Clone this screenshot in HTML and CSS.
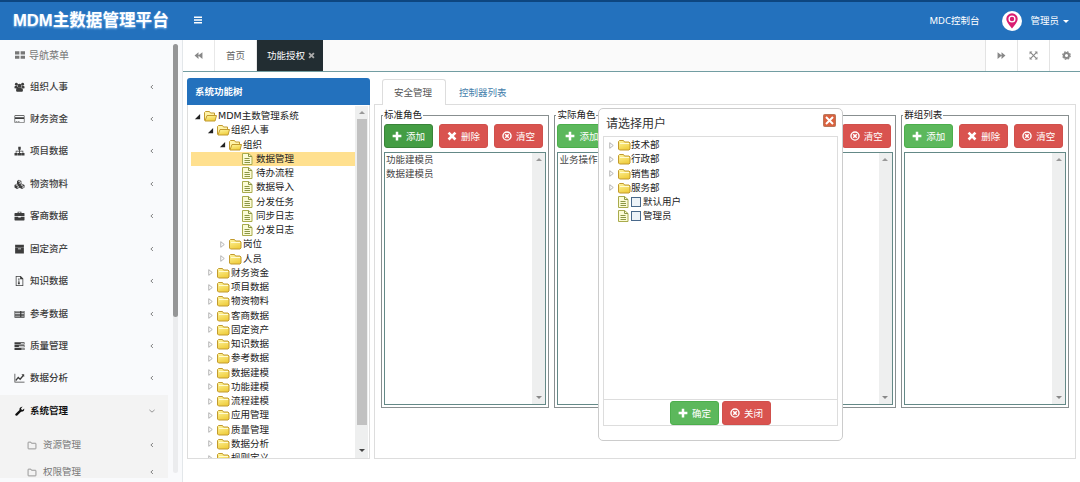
FILE: index.html
```html
<!DOCTYPE html>
<html lang="zh-CN">
<head>
<meta charset="utf-8">
<title>MDM主数据管理平台</title>
<link rel="stylesheet" href="styles.css">
</head>
<body>
<svg class="defs" width="0" height="0">
  <defs>
    <linearGradient id="gold" x1="0" y1="0" x2="0.4" y2="1"><stop offset="0" stop-color="#fff6a0"/><stop offset="1" stop-color="#f0cf42"/></linearGradient>
    <symbol id="grid" viewBox="0 0 16 16"><path d="M0 2h7v5H0zM9 2h7v5H9zM0 9h7v5H0zM9 9h7v5H9z"/></symbol>
    <symbol id="users" viewBox="0 0 16 16"><circle cx="3" cy="3.500" r="2.300"/><circle cx="13" cy="3.500" r="2.300"/><circle cx="8" cy="6" r="3.200"/><path d="M0 10V7q2-1.500 4-.5l2 2.500-2 1.500zM16 10V7q-2-1.500-4-.5L10 9l2 1.500zM2.500 14q0-5.500 3.500-5.500 2 1.500 4 0 3.500 0 3.500 5.500l-1 1.500h-9z"/></symbol>
    <symbol id="card" viewBox="0 0 16 16"><path fill-rule="evenodd" d="M1 2h14q1 0 1 1v10q0 1-1 1H1q-1 0-1-1V3q0-1 1-1zM1 3v2h14V3zM1 8v5h14V8zM2 11h2v1H2zM5 11h3v1H5z"/></symbol>
    <symbol id="sitemap" viewBox="0 0 16 16"><path d="M6 1h4v5H8.700v1.500H14V11h2v4h-5v-4h2V8.700H8.700V11h2v4H5.500v-4h1.800V8.700H3V11h2v4H0v-4h2V7.500h5.300V6H6z"/></symbol>
    <symbol id="cubes" viewBox="0 0 16 16"><path fill-rule="evenodd" d="M7 1l4 2v4l5 2.500v4L12 16l-4-2-4 2-4-2.500v-4L4 7V3zM5.500 3.500L8 4.500l2-1L7.500 2.500zM8 6v2l2-1V4.500zM1.500 9.500L4 10.800l2-1L3.800 8.500zM4.700 12v2.500l2-1V11zM9.500 9.500l2.500 1.300 2-1-2.300-1.300zM12.700 12v2.500l2-1V11z"/></symbol>
    <symbol id="suitcase" viewBox="0 0 16 16"><path fill-rule="evenodd" d="M5 3V1h6v2h4q1 0 1 1v4H0V4q0-1 1-1zM6.500 3h3V2h-3zM0 9h6v1.500h4V9h6v5q0 1-1 1H1q-1 0-1-1z"/></symbol>
    <symbol id="archive" viewBox="0 0 16 16"><path fill-rule="evenodd" d="M1 1h14v4H1zM1 5.500h14V15H1zM5.500 7v1.200h5V7z"/></symbol>
    <symbol id="zip" viewBox="0 0 16 16"><path fill-rule="evenodd" d="M2 0h8l4 4v12H2zM3.200 1.200v13.600h9.600V5H9V1.200zM6 4h2v2H6zM6 7h2v2H6zM5.500 10h3v3h-3z"/></symbol>
    <symbol id="news" viewBox="0 0 16 16"><path fill-rule="evenodd" d="M0 3h16v11H0zM1 4v1h8V4zM1 6.500v1h8v-1zM1 9v1h8V9zM1 11.500v1h8v-1zM11 4v1h4V4zM11 6.500v1h4v-1zM11 9v1h4V9zM11 11.500v1h4v-1z"/></symbol>
    <symbol id="tasks" viewBox="0 0 16 16"><path fill-rule="evenodd" d="M0 2h16v3.500H0zM10 3v1.500h5V3zM0 6.500h16V10H0zM7 7.500V9h8V7.500zM0 11h16v3.500H0zM11 12v1.500h4V12z"/></symbol>
    <symbol id="chart" viewBox="0 0 16 16"><path d="M0 1h1.200v13H16v1H0z"/><path fill="none" stroke="currentColor" stroke-width="2" d="M2 12l4-5 3 3 5-6"/><path d="M11 2h4.500v4.500z"/></symbol>
    <symbol id="wrench" viewBox="0 0 16 16"><path d="M1 13L8 6.500Q7 2 12 1l1 .2-2.500 2.500.5 2 2 .5L15.500 4q.8 5-5 5.200L4 15.500q-2.500.5-3-2.500z"/></symbol>
    <symbol id="folder-o" viewBox="0 0 16 16"><path fill="none" stroke="currentColor" stroke-width="1.300" d="M1 3q0-1 1-1h4l1 2h7q1 0 1 1v8q0 1-1 1H2q-1 0-1-1z"/></symbol>
    <symbol id="left" viewBox="0 0 16 16"><path fill="none" stroke="currentColor" stroke-width="2.400" d="M10.500 3L5 8l5.500 5"/></symbol>
    <symbol id="down" viewBox="0 0 16 16"><path fill="none" stroke="currentColor" stroke-width="2" d="M1 5l7 6 7-6"/></symbol>
    <symbol id="back" viewBox="0 0 16 16"><path d="M8 2v5.500L15 2v12L8 8.500V14L1 8z"/></symbol>
    <symbol id="fwd" viewBox="0 0 16 16"><path d="M8 2v5.500L1 2v12l7-5.500V14l7-6z"/></symbol>
    <symbol id="expand" viewBox="0 0 16 16"><path d="M1 1h5L1 6zM15 1v5l-5-5zM1 15v-5l5 5zM15 15h-5l5-5z"/><path fill="none" stroke="currentColor" stroke-width="2" d="M3 3l10 10M13 3L3 13"/></symbol>
    <symbol id="gear" viewBox="0 0 16 16"><circle cx="8" cy="8" r="4.500" fill="none" stroke="currentColor" stroke-width="3.500"/><circle cx="8" cy="8" r="6.800" fill="none" stroke="currentColor" stroke-width="2" stroke-dasharray="3 2.340"/></symbol>
    <symbol id="plus" viewBox="0 0 16 16"><path d="M6 1h4v5h5v4h-5v5H6v-5H1V6h5z"/></symbol>
    <symbol id="times" viewBox="0 0 16 16"><path d="M4 1l4 4 4-4 3 3-4 4 4 4-3 3-4-4-4 4-3-3 4-4-4-4z"/></symbol>
    <symbol id="circle-x" viewBox="0 0 16 16"><circle cx="8" cy="8" r="6.500" fill="none" stroke="currentColor" stroke-width="2.200"/><path fill="none" stroke="currentColor" stroke-width="2.500" d="M5.200 5.200l5.600 5.600M10.800 5.200l-5.600 5.600"/></symbol>
    <symbol id="bars" viewBox="0 0 16 16"><path d="M0 1h16v3H0zM0 6.500h16v3H0zM0 12h16v3H0z"/></symbol>
    <symbol id="closed" viewBox="0 0 13 12"><path fill="url(#gold)" stroke="#c29a2e" d="M.5 2.500l1-1h4l1 1.500H11l1 1v6l-1 1H1.500l-1-1z"/><path stroke="#fffbd0" d="M2 4.500h9"/></symbol>
    <symbol id="open" viewBox="0 0 13 12"><path fill="#fff3a8" stroke="#c29a2e" d="M.5 10.500v-8l1-1h4l1 1.500h4v2"/><path fill="url(#gold)" stroke="#c29a2e" d="M1 11l2-5.500h9.500L11 11z"/></symbol>
    <symbol id="file" viewBox="0 0 11 12"><path fill="#fbfbd6" stroke="#a9ab4c" d="M.5.500h6l3.500 3v8H.5z"/><path fill="none" stroke="#8b9646" d="M6.500.500v3H10M2.500 5.500h5M2.500 7.500h5.500M2.500 9.500h5.500"/></symbol>
    <symbol id="arrow-open" viewBox="0 0 8 8"><path fill="#222" d="M7 1v6H1z"/></symbol>
    <symbol id="arrow-closed" viewBox="0 0 8 8"><path fill="#fff" stroke="#aaa" d="M2 .8L6 4 2 7.200z"/></symbol>
  </defs>
</svg>

<header class="header">
  <h1 class="brand">MDM主数据管理平台</h1>
  <svg class="burger"><use href="#bars"/></svg>
  <span class="console">MDC控制台</span>
  <svg class="avatar" viewBox="0 0 20 20"><circle cx="10" cy="10" r="10" fill="#fff"/><path fill="#d91d72" d="M10 17.500Q4.300 11 4.300 8a5.700 5.700 0 0 1 11.400 0q0 3-5.700 9.500z"/><circle cx="10" cy="8" r="2.900" fill="#d91d72" stroke="#fff" stroke-width="1.300"/></svg>
  <span class="user">管理员</span><i class="caret"></i>
</header>

<div class="shell">
  <aside class="sidebar">
    <nav class="nav">
      <div class="nav-head"><svg><use href="#grid"/></svg>导航菜单</div>
      <div class="nav-item"><svg><use href="#users"/></svg><span>组织人事</span><svg class="chev"><use href="#left"/></svg></div>
      <div class="nav-item"><svg><use href="#card"/></svg><span>财务资金</span><svg class="chev"><use href="#left"/></svg></div>
      <div class="nav-item"><svg><use href="#sitemap"/></svg><span>项目数据</span><svg class="chev"><use href="#left"/></svg></div>
      <div class="nav-item"><svg><use href="#cubes"/></svg><span>物资物料</span><svg class="chev"><use href="#left"/></svg></div>
      <div class="nav-item"><svg><use href="#suitcase"/></svg><span>客商数据</span><svg class="chev"><use href="#left"/></svg></div>
      <div class="nav-item"><svg><use href="#archive"/></svg><span>固定资产</span><svg class="chev"><use href="#left"/></svg></div>
      <div class="nav-item"><svg><use href="#zip"/></svg><span>知识数据</span><svg class="chev"><use href="#left"/></svg></div>
      <div class="nav-item"><svg><use href="#news"/></svg><span>参考数据</span><svg class="chev"><use href="#left"/></svg></div>
      <div class="nav-item"><svg><use href="#tasks"/></svg><span>质量管理</span><svg class="chev"><use href="#left"/></svg></div>
      <div class="nav-item"><svg><use href="#chart"/></svg><span>数据分析</span><svg class="chev"><use href="#left"/></svg></div>
      <div class="nav-group">
        <div class="nav-item current"><svg><use href="#wrench"/></svg><span>系统管理</span><svg class="chev"><use href="#down"/></svg></div>
        <div class="nav-sub"><svg><use href="#folder-o"/></svg><span>资源管理</span><svg class="chev"><use href="#left"/></svg></div>
        <div class="nav-sub"><svg><use href="#folder-o"/></svg><span>权限管理</span><svg class="chev"><use href="#left"/></svg></div>
      </div>
    </nav>
    <div class="side-scroll"><div class="side-thumb"></div></div>
  </aside>

  <main class="main">
    <div class="tabbar">
      <div class="tool"><svg><use href="#back"/></svg></div>
      <div class="page-tab">首页</div>
      <div class="page-tab active">功能授权<svg><use href="#times"/></svg></div>
      <div class="spacer"></div>
      <div class="tool end"><svg><use href="#fwd"/></svg></div>
      <div class="tool end"><svg><use href="#expand"/></svg></div>
      <div class="tool end last"><svg><use href="#gear"/></svg></div>
    </div>

    <div class="work">
      <section class="tree-panel">
        <h2 class="tree-title">系统功能树</h2>
        <div class="tree-body">
          <div class="tree">
            <div class="row l0"><svg class="arw"><use href="#arrow-open"/></svg><svg class="fold"><use href="#open"/></svg>MDM主数管理系统</div>
            <div class="row l1"><svg class="arw"><use href="#arrow-open"/></svg><svg class="fold"><use href="#open"/></svg>组织人事</div>
            <div class="row l2"><svg class="arw"><use href="#arrow-open"/></svg><svg class="fold"><use href="#open"/></svg>组织</div>
            <div class="row l3 selected"><svg class="doc"><use href="#file"/></svg>数据管理</div>
            <div class="row l3"><svg class="doc"><use href="#file"/></svg>待办流程</div>
            <div class="row l3"><svg class="doc"><use href="#file"/></svg>数据导入</div>
            <div class="row l3"><svg class="doc"><use href="#file"/></svg>分发任务</div>
            <div class="row l3"><svg class="doc"><use href="#file"/></svg>同步日志</div>
            <div class="row l3"><svg class="doc"><use href="#file"/></svg>分发日志</div>
            <div class="row l2"><svg class="arw"><use href="#arrow-closed"/></svg><svg class="fold"><use href="#closed"/></svg>岗位</div>
            <div class="row l2"><svg class="arw"><use href="#arrow-closed"/></svg><svg class="fold"><use href="#closed"/></svg>人员</div>
            <div class="row l1"><svg class="arw"><use href="#arrow-closed"/></svg><svg class="fold"><use href="#closed"/></svg>财务资金</div>
            <div class="row l1"><svg class="arw"><use href="#arrow-closed"/></svg><svg class="fold"><use href="#closed"/></svg>项目数据</div>
            <div class="row l1"><svg class="arw"><use href="#arrow-closed"/></svg><svg class="fold"><use href="#closed"/></svg>物资物料</div>
            <div class="row l1"><svg class="arw"><use href="#arrow-closed"/></svg><svg class="fold"><use href="#closed"/></svg>客商数据</div>
            <div class="row l1"><svg class="arw"><use href="#arrow-closed"/></svg><svg class="fold"><use href="#closed"/></svg>固定资产</div>
            <div class="row l1"><svg class="arw"><use href="#arrow-closed"/></svg><svg class="fold"><use href="#closed"/></svg>知识数据</div>
            <div class="row l1"><svg class="arw"><use href="#arrow-closed"/></svg><svg class="fold"><use href="#closed"/></svg>参考数据</div>
            <div class="row l1"><svg class="arw"><use href="#arrow-closed"/></svg><svg class="fold"><use href="#closed"/></svg>数据建模</div>
            <div class="row l1"><svg class="arw"><use href="#arrow-closed"/></svg><svg class="fold"><use href="#closed"/></svg>功能建模</div>
            <div class="row l1"><svg class="arw"><use href="#arrow-closed"/></svg><svg class="fold"><use href="#closed"/></svg>流程建模</div>
            <div class="row l1"><svg class="arw"><use href="#arrow-closed"/></svg><svg class="fold"><use href="#closed"/></svg>应用管理</div>
            <div class="row l1"><svg class="arw"><use href="#arrow-closed"/></svg><svg class="fold"><use href="#closed"/></svg>质量管理</div>
            <div class="row l1"><svg class="arw"><use href="#arrow-closed"/></svg><svg class="fold"><use href="#closed"/></svg>数据分析</div>
            <div class="row l1"><svg class="arw"><use href="#arrow-closed"/></svg><svg class="fold"><use href="#closed"/></svg>规则定义</div>
          </div>
          <div class="scroll tree-scroll"><i class="up"></i><div class="thumb"></div><i class="dn"></i></div>
        </div>
      </section>

      <section class="detail">
        <div class="subtabs"><div class="subtab on">安全管理</div><div class="subtab">控制器列表</div></div>
        <div class="detail-body">
          <fieldset class="group">
            <legend>标准角色</legend>
            <div class="buttons"><button class="btn add pressed"><svg><use href="#plus"/></svg>添加</button><button class="btn del"><svg><use href="#times"/></svg>删除</button><button class="btn del"><svg><use href="#circle-x"/></svg>清空</button></div>
            <div class="list"><div class="options"><div>功能建模员</div><div>数据建模员</div></div><div class="scroll"><i class="up"></i><i class="dn"></i></div></div>
          </fieldset>
          <fieldset class="group">
            <legend>实际角色</legend>
            <div class="buttons"><button class="btn add"><svg><use href="#plus"/></svg>添加</button></div>
            <div class="list"><div class="options"><div>业务操作</div></div></div>
          </fieldset>
          <fieldset class="group untitled">
            <div class="buttons"><button class="btn del"><svg><use href="#circle-x"/></svg>清空</button></div>
            <div class="list"><div class="options"></div><div class="scroll"><i class="up"></i><i class="dn"></i></div></div>
          </fieldset>
          <fieldset class="group">
            <legend>群组列表</legend>
            <div class="buttons"><button class="btn add"><svg><use href="#plus"/></svg>添加</button><button class="btn del"><svg><use href="#times"/></svg>删除</button><button class="btn del"><svg><use href="#circle-x"/></svg>清空</button></div>
            <div class="list"><div class="options"></div><div class="scroll"><i class="up"></i><i class="dn"></i></div></div>
          </fieldset>
        </div>
      </section>
    </div>
  </main>
</div>

<div class="modal">
  <div class="modal-head"><span>请选择用户</span><svg class="close" viewBox="0 0 13 13"><rect x=".5" y=".5" width="12" height="12" rx="1" fill="#d9623f" stroke="#b8765b"/><path d="M3 3l7 7M10 3l-7 7" stroke="#fff" stroke-width="2"/></svg></div>
  <div class="modal-body">
    <div class="row"><svg class="arw"><use href="#arrow-closed"/></svg><svg class="fold"><use href="#closed"/></svg>技术部</div>
    <div class="row"><svg class="arw"><use href="#arrow-closed"/></svg><svg class="fold"><use href="#closed"/></svg>行政部</div>
    <div class="row"><svg class="arw"><use href="#arrow-closed"/></svg><svg class="fold"><use href="#closed"/></svg>销售部</div>
    <div class="row"><svg class="arw"><use href="#arrow-closed"/></svg><svg class="fold"><use href="#closed"/></svg>服务部</div>
    <div class="row leaf"><svg class="doc"><use href="#file"/></svg><i class="check"></i>默认用户</div>
    <div class="row leaf"><svg class="doc"><use href="#file"/></svg><i class="check"></i>管理员</div>
  </div>
  <div class="modal-foot"><button class="btn add"><svg><use href="#plus"/></svg>确定</button><button class="btn del"><svg><use href="#circle-x"/></svg>关闭</button></div>
</div>
</body>
</html>
```
FILE: styles.css
```css
* { box-sizing: border-box; }
body { margin: 0; height: 482px; overflow: hidden; background: #fff; color: #333; font: 9.5px/14px "Noto Sans", "Noto Sans CJK SC", sans-serif; white-space: nowrap; }
svg { display: block; flex: none; fill: currentColor; }
.defs { position: absolute; }

.header { display: flex; align-items: center; height: 40px; padding: 0 11px 0 13px; background: #2371bd; border-top: 2px solid #0d4680; color: #fff; }
.brand { width: 181px; margin: 0; font: 700 16.6px/36px "Liberation Sans", "Noto Sans CJK SC", sans-serif; text-shadow: 0 1px 2px #8fc0ee; }
.burger { width: 8px; height: 8px; margin-top: -2px; }
.console { margin-left: auto; margin-right: 23px; }
.avatar { width: 20px; height: 20px; margin-right: 8px; }
.user { margin-right: 4px; }
.caret { border: 3px solid transparent; border-top-color: #fff; border-bottom: 0; }

.shell { display: flex; height: 442px; }
.sidebar { display: flex; width: 183px; padding-top: 4px; background: #f9fafc; border-right: 1px solid #e3e7ea; }
.nav { width: 168px; margin-right: 5px; }
.nav-head { display: flex; align-items: center; gap: 4px; height: 26.3px; padding: 0 0 4px 15px; color: #777; font-size: 10px; }
.nav-head svg { width: 10px; height: 10px; }
.nav-item { display: flex; align-items: center; height: 32.45px; padding: 0 13px 0 14px; color: #3d3d3d; font-weight: 500; }
.nav-item span { margin-left: 6px; }
.nav-item svg { width: 11px; height: 10px; margin-right: -1px; }
.nav-item .chev, .nav-sub .chev { width: 6px; height: 6px; margin: 0 0 0 auto; color: #777; }
.nav-group { height: 83px; background: #f3f3f3; }
.current { color: #111; font-weight: 700; }
.nav-sub { display: flex; align-items: center; height: 24px; padding: 4px 13px 0 27px; color: #777; }
.nav-sub:nth-child(2) { height: 31px; padding-top: 5px; }
.nav-sub span { margin-left: 6px; }
.nav-sub svg { width: 10px; height: 9px; }
.side-scroll { width: 5px; height: 429px; background: #ebecee; border-radius: 3px; }
.side-thumb { height: 273px; background: #959697; border-radius: 3px; }

.main { flex: 1; min-width: 0; }
.tabbar { display: flex; height: 32px; background: #fafafa; border-bottom: 1px solid #729da2; }
.tool, .page-tab { display: flex; align-items: center; justify-content: center; background: #fff; border-right: 1px solid #e8e8e8; color: #888; }
.tool { width: 32px; }
.tool svg { width: 9px; height: 9px; }
.tool.end { border-right: 0; border-left: 1px solid #e3e3e3; }
.tool.last { width: 31px; padding-left: 3px; }
.page-tab { width: 42px; color: #666; }
.page-tab.active { gap: 3px; width: 66px; padding-left: 2px; background: #222d32; color: #fff; border: 0; }
.page-tab svg { width: 7px; height: 7px; color: #aaa; }
.spacer { flex: 1; }

.work { display: flex; gap: 4px; padding: 6px 4px 0; }
.tree-panel { width: 183px; height: 381px; }
.tree-title { height: 27px; margin: 0; padding-left: 8px; background: #2371bd; border-radius: 3px 3px 0 0; color: #fff; font: 700 9.5px/26px "Noto Sans CJK SC", sans-serif; }
.tree-body { display: flex; justify-content: space-between; height: 354px; overflow: hidden; border: 1px solid #ddd; border-top: 0; padding: 4px 1px 0 3px; }
.tree { width: 165px; }
.row { display: flex; align-items: center; height: 14.25px; padding-left: 3px; color: #222; font: 9.5px/14px "DejaVu Sans", "Noto Sans CJK SC", sans-serif; }
.l1 { padding-left: 16px; }
.l2 { padding-left: 28px; }
.l3 { padding-left: 51px; }
.selected { background: #ffe08f; }
.arw { width: 7px; height: 7px; margin-right: 3px; }
.fold { width: 13px; height: 12px; margin-right: 1px; }
.doc { width: 11px; height: 12px; margin-right: 3px; }

.scroll { display: flex; flex-direction: column; align-items: center; justify-content: space-between; width: 13px; background: #eeefef; padding: 5px 0; }
.tree-scroll { margin-top: -3px; padding: 5px 0 6px; }
.thumb { width: 10px; height: 306px; margin-top: 5px; margin-bottom: auto; background: #c1c1c1; }
.up, .dn { border: 3px solid transparent; }
.up { border-top: 0; border-bottom-color: #999; }
.dn { border-bottom: 0; border-top-color: #888; }
.tree-scroll .dn { border-top-color: #444; }

.detail { width: 703px; height: 381px; }
.subtabs { display: flex; height: 27px; padding: 1px 0 0 8px; border-bottom: 1px solid #ddd; }
.subtab { height: 26px; padding: 0 13px; color: #4581ac; line-height: 27px; }
.subtab.on { width: 64px; padding: 0 11px; background: #fff; border: 1px solid #ddd; border-bottom: 0; border-radius: 3px 3px 0 0; color: #555; line-height: 26px; }
.detail-body { display: grid; grid-template-columns: repeat(4, 168px); column-gap: 5.4px; height: 354px; padding: 4px 6px 0; border: 1px solid #ddd; border-top: 0; }
.group { min-width: 0; height: 299px; margin: 0; padding: 0 2px; border: 1px solid #888f90; }
.group legend { height: 12px; padding: 0 1px; margin-left: -1px; color: #222; line-height: 12px; }
.untitled { height: 293px; margin-top: 6px; padding-top: 5px; }
.buttons { display: flex; gap: 6px; padding: 3px 0 4px; }
.untitled .buttons { padding-left: 111px; }
.btn { display: flex; align-items: center; justify-content: center; gap: 4px; width: 49px; height: 24px; padding: 0; border: 1px solid; border-radius: 3px; color: #fff; font: 9.5px/14px "Noto Sans CJK SC", sans-serif; }
.btn svg { width: 10px; height: 10px; }
.add { background: #5cb85c; border-color: #4cae4c; }
.pressed { background: #449d44; border-color: #398439; }
.del { background: #d9534f; border-color: #d0504c; }
.list { display: flex; width: 162px; height: 253px; border: 1px solid #648987; background: #fff; }
.options { flex: 1; padding-left: 1px; line-height: 13.5px; color: #444; }

.modal { position: absolute; left: 598px; top: 108px; width: 245px; height: 333px; padding: 5px 4px 0; background: #fff; border: 1px solid #ccc; border-radius: 5px; }
.modal-head { display: flex; justify-content: space-between; height: 22px; padding: 0 2px 0 3px; font-size: 12px; line-height: 19px; }
.close { width: 13px; height: 13px; }
.modal-body { height: 264px; padding: 1px 0 0 1px; border: 1px solid #ddd; }
.modal-body .fold { margin-right: 0; }
.leaf { padding-left: 13px; }
.leaf .doc { margin-right: 2px; }
.check { width: 10px; height: 10px; margin-right: 2px; border: 1px solid #49698b; background: #edf3f8; }
.modal-foot { display: flex; justify-content: center; gap: 3px; height: 26px; padding-top: 1px; border: 1px solid #ddd; border-top: 0; }
```
